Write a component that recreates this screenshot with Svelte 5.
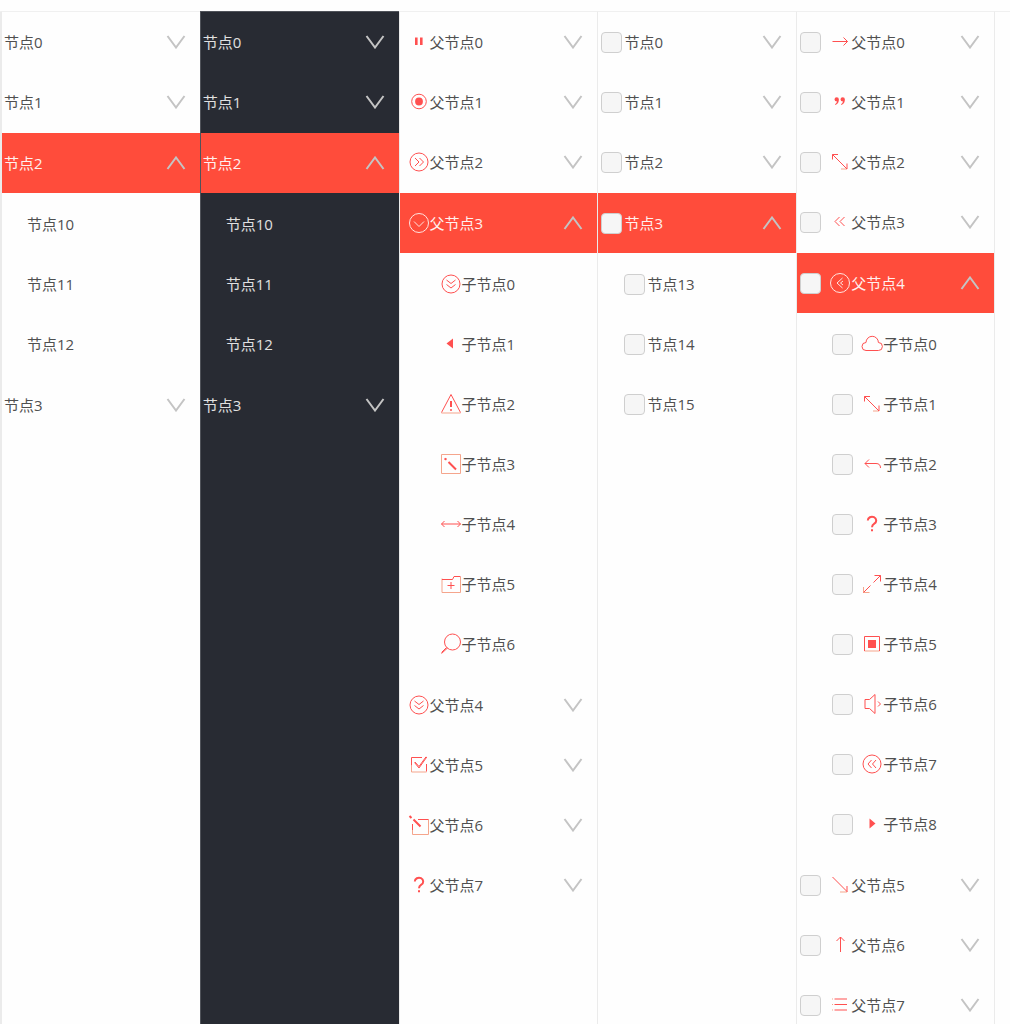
<script lang="ts">
  type Item = { label: string; icon?: string; children?: Item[] };
  type Tree = { name: string; theme: string; checkable: boolean; open: number; items: Item[] };

  const plain = (from: number, to: number): Item[] =>
    Array.from({ length: to - from + 1 }, (_, i) => ({ label: `节点${from + i}` }));
  const withIcons = (prefix: string, icons: string[]): Item[] =>
    icons.map((icon, i) => ({ label: `${prefix}${i}`, icon }));
  const nest = (items: Item[], index: number, children: Item[]): Item[] =>
    items.map((item, i) => (i === index ? { ...item, children } : item));

  const trees: Tree[] = $state([
    { name: '浅色', theme: 'light', checkable: false, open: 2, items: nest(plain(0, 3), 2, plain(10, 12)) },
    { name: '深色', theme: 'dark', checkable: false, open: 2, items: nest(plain(0, 3), 2, plain(10, 12)) },
    {
      name: '图标', theme: 'icons', checkable: false, open: 3,
      items: nest(
        withIcons('父节点', ['pause', 'radio', 'circleRight', 'circleDown', 'circleDoubleDown', 'tick', 'edit', 'question']),
        3,
        withIcons('子节点', ['circleDoubleDown', 'triLeft', 'warning', 'wand', 'horizontal', 'folder', 'search'])
      )
    },
    { name: '多选', theme: 'checks', checkable: true, open: 3, items: nest(plain(0, 3), 3, plain(13, 15)) },
    {
      name: '图标多选', theme: 'full', checkable: true, open: 4,
      items: nest(
        withIcons('父节点', ['right', 'quote', 'diagonal', 'doubleLeft', 'circleLeft', 'downRight', 'up', 'list']),
        4,
        withIcons('子节点', ['cloud', 'diagonal', 'reply', 'question', 'expand', 'stop', 'volume', 'circleDoubleLeft', 'triRight'])
      )
    }
  ]);

  // Icon shapes on a 22 by 22 grid: s = stroked, f = filled, b = bold stroke, p = pale stroke.
  const icons: Record<string, { s?: string; f?: string; b?: string; p?: string }> = {
    pause: { f: 'M7 6.5h2.6V14H7zM12 6.5h2.6V14H12z' },
    radio: { s: 'M3.7 10.5a7.3 7.3 0 1 0 14.6 0a7.3 7.3 0 1 0 -14.6 0', f: 'M7.1 10.5a3.9 3.9 0 1 0 7.8 0a3.9 3.9 0 1 0 -7.8 0' },
    circleRight: { s: 'M2 11a9 9 0 1 0 18 0a9 9 0 1 0 -18 0M7 7l4 4l-4 4M11.5 7l4 4l-4 4' },
    circleDown: { s: 'M1.5 11a9.5 9.5 0 1 0 19 0a9.5 9.5 0 1 0 -19 0M6 9.5l5 5l5 -5' },
    circleLeft: { s: 'M1.5 11a9.5 9.5 0 1 0 19 0a9.5 9.5 0 1 0 -19 0M13.5 6L8 11l5.500 5M14 9L11.500 11l2.500 2' },
    circleDoubleDown: { s: 'M2 11a9 9 0 1 0 18 0a9 9 0 1 0 -18 0M6.500 7l4.500 3.500l4.500 -3.500M6.500 11.500l4.500 3.500l4.500 -3.500' },
    circleDoubleLeft: { s: 'M2 11a9 9 0 1 0 18 0a9 9 0 1 0 -18 0M10.5 7l-3.5 4l3.5 4M15 7l-3.5 4l3.5 4' },
    tick: { s: 'M14 3.5H3.5v8M18.5 10v7.5M6.500 8.500l4.500 5.500L18.800 3M7 8l4 4.500L18 2.800', p: 'M3.5 11.5v6.5h15' },
    edit: { b: 'M1.5 2l2 2M5.5 5.5l7 7', s: 'M10 5.5h10.5M4.5 10v6', p: 'M20.5 5.5V20.5H4.5V15' },
    question: { b: 'M6.8 7.5a4.2 3.8 0 1 1 6.5 3.2Q11 12 11 14.2M11 16.3v2' },
    triLeft: { f: 'M6.5 10.5L13 5.5v10z' },
    triRight: { f: 'M8.5 5.5L14.5 10.5L8.5 15.5z' },
    warning: { s: 'M1.5 19.5L11 1.5L20.5 19.5', p: 'M1.5 20h19', b: 'M11 8v6M11 16.3v1.4' },
    wand: { p: 'M1.5 1.5h19v19H1.5z', b: 'M4.5 5.5l2 1.2M8.5 9l7.5 7.5' },
    horizontal: { s: 'M1.5 11h19M4.5 8l-3 3l3 3M17.5 8l3 3l-3 3' },
    folder: { p: 'M2 5.5V19.5H20.5V4', s: 'M2 6.5h10.5l1.5 -3h6.5M7.5 12.5h7M11 9v7' },
    search: { s: 'M4.5 9a8 8 0 1 0 16 0a8 8 0 1 0 -16 0M7.5 15L1.5 20.5M6.5 14.5L1.5 19.5' },
    right: { s: 'M3.5 10.5h15M14.5 6.5l4 4l-4 4' },
    quote: { f: 'M5.5 8.5a2 2 0 1 1 4.4 0q0 4 -3.4 5.5l-.5 -.7q1.8 -1 2 -2.7q-2.5 0 -2.5 -2.1M11.5 8.5a2 2 0 1 1 4.4 0q0 4 -3.4 5.5l-.5 -.7q1.8 -1 2 -2.7q-2.5 0 -2.5 -2.1' },
    diagonal: { s: 'M3.5 3.5l14.5 14.5M3.5 8.5v-5h5.5M18 12.5V18', p: 'M12 18h6' },
    doubleLeft: { s: 'M10.500 6l-4.500 4.500l4.500 4.500M15.500 6l-4.500 4.500l4.500 4.500' },
    downRight: { s: 'M3.5 3l14.5 14.5M18 12V18', p: 'M11 18h7' },
    up: { s: 'M11.5 18V3M7.5 7l4 -4l4 4' },
    list: { s: 'M5.5 5h12.5M5.5 10.5h12.5M5.5 16h12.5', p: 'M3 5h1M3 10.5h1M3 16h1' },
    cloud: { s: 'M5 17.5a4 4 0 0 1 0 -8a6.2 6.2 0 0 1 12.4 0a4 4 0 0 1 0 8z' },
    reply: { s: 'M8 6.5L4 10.5l4 4M4 10.5h11q4.5 0 4.5 4.5' },
    expand: { s: 'M12.5 9.5L19.5 2.5M13.5 2.5h6v6M9.5 12.5L2.5 19.5', p: 'M2.5 14v5.5H8.5' },
    stop: { s: 'M3.5 18V3.5h15V18', p: 'M3.5 18h15', f: 'M7 7h8v8H7z' },
    volume: { s: 'M4 6.5h4.5L14 1.5v19l-5.5 -5H4zM17 8.5l2.5 2.5l-2.5 2.5' }
  };

  function toggle(tree: Tree, index: number) {
    tree.open = tree.open === index ? -1 : index;
  }
</script>

{#snippet content(item: Item, checkable: boolean)}
  {#if checkable}
    <label class="content">
      <input type="checkbox" class="check" />
      {@render inner(item)}
    </label>
  {:else}
    <span class="content">{@render inner(item)}</span>
  {/if}
{/snippet}

{#snippet inner(item: Item)}
  {#if item.icon}
    {@const shape = icons[item.icon]}
    <svg class="icon" viewBox="0 0 22 22" aria-hidden="true">
      {#if shape.p}<path class="pale" d={shape.p} />{/if}
      {#if shape.s}<path class="line" d={shape.s} />{/if}
      {#if shape.b}<path class="bold" d={shape.b} />{/if}
      {#if shape.f}<path class="fill" d={shape.f} />{/if}
    </svg>
  {/if}
  <span class="text">{item.label}</span>
{/snippet}

<main class="page">
  {#each trees as tree}
    <nav class="tree {tree.theme}" aria-label={tree.name}>
      <ul class="list">
        {#each tree.items as item, i}
          <li class="node" class:open={tree.open === i}>
            <div class="row">
              {@render content(item, tree.checkable)}
              <button
                class="toggle"
                type="button"
                aria-label={item.label}
                aria-expanded={tree.open === i}
                onclick={() => toggle(tree, i)}
              >
                <svg class="chevron" viewBox="0 0 20 14" aria-hidden="true">
                  <path d="M1.5 1l8.5 11.5L18.5 1" />
                </svg>
              </button>
            </div>
            {#if tree.open === i && item.children}
              <ul class="list children">
                {#each item.children as child}
                  <li class="row">{@render content(child, tree.checkable)}</li>
                {/each}
              </ul>
            {/if}
          </li>
        {/each}
      </ul>
    </nav>
  {/each}
</main>

<style>
  :global(body) {
    background: #fefefe;
  }

  .page {
    box-sizing: border-box;
    height: 100vh;
    padding: 11px 15px 0 1px;
    display: grid;
    grid-template-columns: repeat(5, minmax(0, 1fr));
    background:
      linear-gradient(#f0f0f0, #f0f0f0) 0 11px / 100% 1px no-repeat,
      linear-gradient(#ebebeb, #ebebeb) 0 11px / 2px 100% no-repeat;
    font: 15px/20px "Open Sans", "Noto Sans CJK SC", sans-serif;
    color: #505050;
  }

  .tree {
    --pad: 2px;
    --indent: 23px;
    border-top: 1px solid #f0f0f0;
    border-left: 1px solid #ebebeb;
    overflow-y: auto;
    scrollbar-width: none;
    background: #fefefe;
  }

  .tree:last-child {
    border-right: 1px solid #ebebeb;
  }

  .dark {
    background: #282b33;
    border-color: #50535a;
    color: #e0e0e0;
  }

  .icons {
    --pad: 8px;
    --indent: 32px;
  }

  .checks {
    --pad: 3px;
  }

  .full {
    --pad: 3px;
    --indent: 32px;
  }

  .list {
    list-style: none;
    margin: 0;
    padding: 0;
  }

  .row {
    box-sizing: border-box;
    height: 60px;
    padding: 0 14px 0 var(--pad);
    display: flex;
    align-items: center;
    justify-content: space-between;
  }

  .children {
    padding: 1px 0;
  }

  .children .row {
    padding-left: calc(var(--pad) + var(--indent));
  }

  .open {
    padding-top: 1px;
  }

  .open > .row {
    background: #ff4c3b;
    color: #fff0ee;
  }

  .content {
    display: flex;
    align-items: center;
    white-space: nowrap;
  }

  .check {
    appearance: none;
    box-sizing: border-box;
    width: 21px;
    height: 21px;
    margin: 0 2px 0 0;
    border: 1px solid #cfcfcf;
    border-radius: 4px;
    background: #f6f6f6;
  }

  .check:checked {
    background: #ff4c3b;
  }

  .full .check {
    margin-right: 8px;
  }

  .icon {
    width: 22px;
    height: 22px;
    color: #ff5050;
  }

  .icon path {
    fill: none;
    stroke: currentColor;
    stroke-width: 1;
  }

  .icon .pale {
    stroke: #f5a58c;
  }

  .icon .bold {
    stroke-width: 2;
  }

  .icon .fill {
    fill: currentColor;
    stroke: none;
  }

  .open > .row .icon {
    color: #ffe4e0;
  }

  .toggle {
    width: 20px;
    height: 20px;
    padding: 0;
    border: 0;
    background: none;
    cursor: pointer;
    display: grid;
    place-items: center;
  }

  .chevron {
    width: 20px;
    height: 14px;
    fill: none;
    stroke: #c4c4c4;
    stroke-width: 2;
  }

  .open .chevron {
    transform: rotate(180deg);
  }
</style>
